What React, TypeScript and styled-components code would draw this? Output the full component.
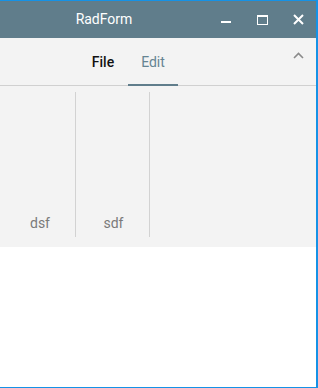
import React from "react";
import styled, { createGlobalStyle } from "styled-components";

const Global = createGlobalStyle`
  html, body { margin: 0; padding: 0; background: #ffffff; }
  * { box-sizing: border-box; }
`;

const Window = styled.div`
  width: 318px;
  height: 388px;
  border-top: 1px solid #1592e6;
  border-right: 2px solid #1592e6;
  border-bottom: 1px solid #1592e6;
  background: #ffffff;
  display: flex;
  flex-direction: column;
  font-family: Roboto, "Liberation Sans", sans-serif;
  overflow: hidden;
`;

const TitleBar = styled.div`
  height: 37px;
  background: #607d8b;
  display: flex;
  align-items: center;
  flex-shrink: 0;
`;

const Title = styled.div`
  flex: 1;
  text-align: center;
  color: #ffffff;
  font-size: 14px;
  line-height: 16px;
  padding-bottom: 1px;
`;

const WinButton = styled.div`
  width: 36px;
  height: 37px;
  display: flex;
  align-items: center;
  justify-content: center;
`;

const TabStrip = styled.div`
  height: 48px;
  background: #f3f3f3;
  border-bottom: 1px solid #d0d0d0;
  display: flex;
  align-items: stretch;
  padding-left: 78px;
  flex-shrink: 0;
`;

const Tab = styled.div<{ $active?: boolean }>`
  width: 50px;
  height: 48px;
  margin-bottom: -1px;
  display: flex;
  align-items: center;
  justify-content: center;
  font-size: 14px;
  line-height: 16px;
  padding-top: 1px;
  font-weight: ${(p) => (p.$active ? 400 : 500)};
  color: ${(p) => (p.$active ? "#658492" : "#111111")};
  border-bottom: 2px solid ${(p) => (p.$active ? "#607d8b" : "transparent")};
`;

const Spacer = styled.div`
  flex: 1;
`;

const Collapse = styled.div`
  width: 20px;
  height: 20px;
  margin-top: 7px;
  margin-right: 8px;
  display: flex;
  align-items: center;
  justify-content: center;
`;

const GroupArea = styled.div`
  height: 161px;
  background: #f3f3f3;
  display: flex;
  padding: 6px 0 10px 3px;
  flex-shrink: 0;
`;

const Group = styled.div<{ $w: number }>`
  width: ${(p) => p.$w}px;
  height: 100%;
  display: flex;
  flex-direction: column;
  justify-content: flex-end;
  align-items: center;
  padding-bottom: 6px;
  padding-left: 2px;
`;

const Separator = styled.div`
  width: 1px;
  height: 100%;
  background: #d2d2d2;
`;

const GroupLabel = styled.div`
  font-size: 14px;
  line-height: 16px;
  color: #7a7a7a;
`;

export default function App() {
  return (
    <>
      <Global />
      <Window>
        <TitleBar>
          <Title>RadForm</Title>
          <WinButton>
            <svg width="10" height="10" viewBox="0 0 10 10">
              <rect x="0" y="6" width="10" height="2" fill="#fff" />
            </svg>
          </WinButton>
          <WinButton>
            <svg width="11" height="10" viewBox="0 0 11 10">
              <rect x="0.5" y="0.5" width="10" height="9" fill="none" stroke="#fff" strokeWidth="1" />
              <rect x="0" y="0" width="11" height="2" fill="#fff" />
            </svg>
          </WinButton>
          <WinButton>
            <svg width="11" height="11" viewBox="0 0 11 11">
              <path d="M1 1 L10 10 M10 1 L1 10" stroke="#fff" strokeWidth="2" />
            </svg>
          </WinButton>
        </TitleBar>
        <TabStrip>
          <Tab>File</Tab>
          <Tab $active>Edit</Tab>
          <Spacer />
          <Collapse>
            <svg width="11" height="7" viewBox="0 0 11 7">
              <path d="M1 6 L5.5 1.5 L10 6" fill="none" stroke="#8a8a8a" strokeWidth="1.6" />
            </svg>
          </Collapse>
        </TabStrip>
        <GroupArea>
          <Group $w={72}>
            <GroupLabel>dsf</GroupLabel>
          </Group>
          <Separator />
          <Group $w={73}>
            <GroupLabel>sdf</GroupLabel>
          </Group>
          <Separator />
        </GroupArea>
      </Window>
    </>
  );
}
